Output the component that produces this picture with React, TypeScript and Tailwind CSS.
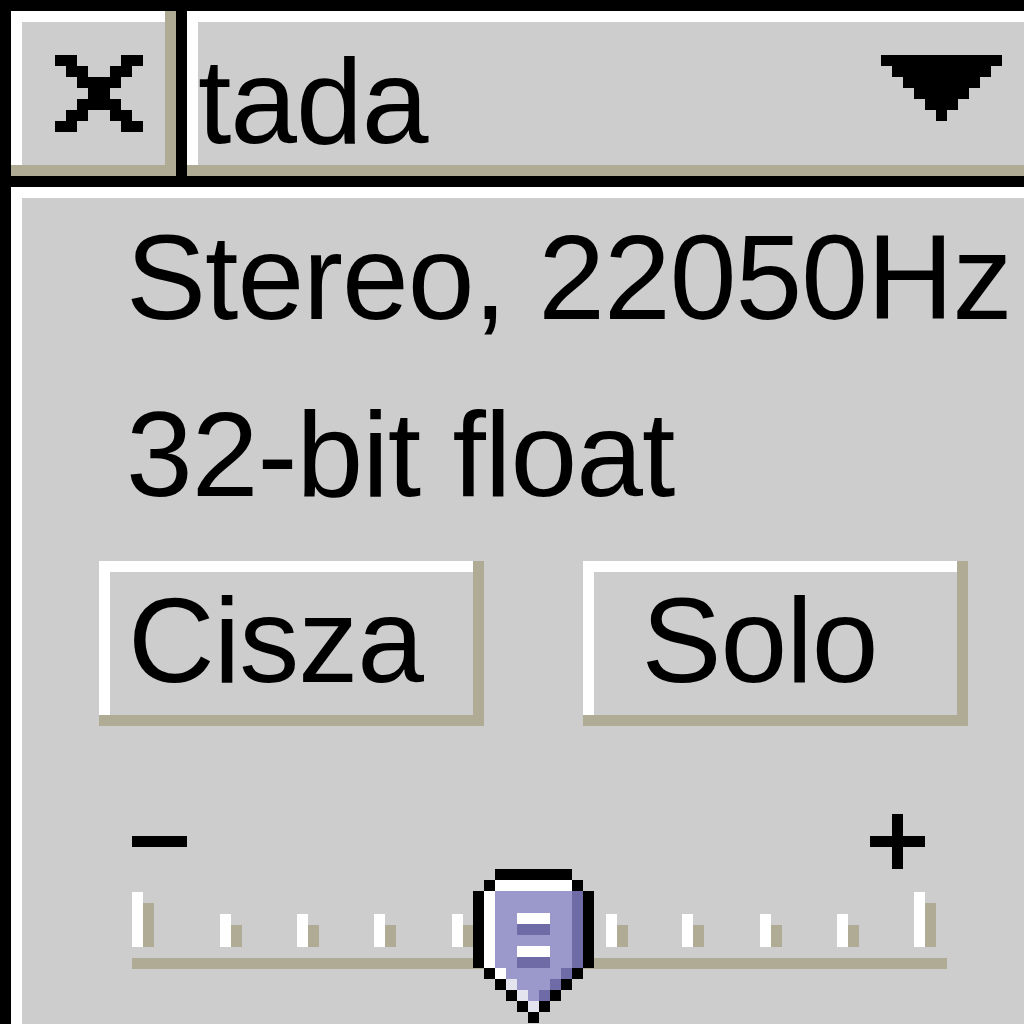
import React from 'react';

// one "pixel" of the zoomed-in bitmap ui
const U = 11;

const PAL: Record<string, string> = {
  K: '#000000',
  W: '#ffffff',
  B: '#9b99cc',
  D: '#6e6ba7',
  L: '#e4e4ee',
  T: '#b0ab94',
};

const CLOSE_X = [
  'KK....KK',
  '.KK..KK.',
  '..KKKK..',
  '...KK...',
  '..KKKK..',
  '.KK..KK.',
  'KK....KK',
];

const MENU_ARROW = [
  'KKKKKKKKKKK',
  '.KKKKKKKKK.',
  '..KKKKKKK..',
  '...KKKKK...',
  '....KKK....',
  '.....K.....',
];

const THUMB = [
  '..KKKKKKK..',
  '.KWWWWWWWK.',
  'KWBBBBBBBDK',
  'KWBBBBBBBDK',
  'KWBBWWWBBDK',
  'KWBBDDDBBDK',
  'KWBBBBBBBDK',
  'KWBBWWWBBDK',
  'KWBBDDDBBDK',
  '.KWBBBBBDK.',
  '..KLBBBDK..',
  '...KLBDK...',
  '....KLK....',
  '.....K.....',
];

const pixels = (rows: string[], ox = 0, oy = 0) =>
  rows.flatMap((row, y) =>
    row.split('').map((c, x) =>
      PAL[c] ? (
        <rect key={`${ox}-${oy}-${x}-${y}`} x={ox + x * U} y={oy + y * U} width={U} height={U} fill={PAL[c]} />
      ) : null
    )
  );

const PixelArt: React.FC<{ rows: string[]; className?: string }> = ({ rows, className }) => (
  <svg
    width={rows[0].length * U}
    height={rows.length * U}
    viewBox={`0 0 ${rows[0].length * U} ${rows.length * U}`}
    shapeRendering="crispEdges"
    className={className}
  >
    {pixels(rows)}
  </svg>
);

const SMALL_TICKS = [88, 165, 242, 320, 397, 474, 550, 628, 705];

const GainSlider = () => (
  <svg width={837} height={210} viewBox="0 0 837 210" shapeRendering="crispEdges" className="block">
    {/* minus / plus */}
    <rect x={0} y={22} width={55} height={11} fill="#000" />
    <rect x={738} y={22} width={55} height={11} fill="#000" />
    <rect x={760} y={0} width={11} height={55} fill="#000" />

    {/* end ticks */}
    {[0, 782].map((x) => (
      <g key={x}>
        <rect x={x} y={78} width={11} height={55} fill="#fff" />
        <rect x={x + 11} y={89} width={11} height={44} fill={PAL.T} />
      </g>
    ))}
    {SMALL_TICKS.map((x) => (
      <g key={x}>
        <rect x={x} y={100} width={11} height={33} fill="#fff" />
        <rect x={x + 11} y={111} width={11} height={22} fill={PAL.T} />
      </g>
    ))}

    {/* track */}
    <rect x={0} y={144} width={815} height={11} fill={PAL.T} />

    {/* thumb */}
    {pixels(THUMB, 341, 55)}
  </svg>
);

// raised 3d box: white top/left, tan bottom/right (tan wins at the corners)
const raised = 'shadow-[inset_-11px_-11px_0_#b0ab94,inset_11px_11px_0_#ffffff]';

export default function App() {
  return (
    <div className="w-[1024px] h-[1024px] overflow-hidden bg-black pl-[11px] pt-[11px] font-['Liberation_Sans',Arial,sans-serif] text-black text-[120px] leading-[88px] tracking-[-1px]">
      {/* close button + track name */}
      <div className="flex gap-[11px] h-[165px]">
        <div className={`w-[165px] h-[165px] shrink-0 bg-[#cdcdcd] pl-[44px] pt-[44px] ${raised}`}>
          <PixelArt rows={CLOSE_X} className="block" />
        </div>
        <div className={`w-[848px] h-[165px] shrink-0 bg-[#cdcdcd] flex items-start ${raised}`}>
          <div className="ml-[11px] mt-[46px] h-[88px]">tada</div>
          <PixelArt rows={MENU_ARROW} className="block ml-auto mt-[44px] mr-[33px]" />
        </div>
      </div>

      {/* track info panel */}
      <div className="mt-[11px] w-[1100px] h-[900px] bg-[#cdcdcd] pt-[46px] shadow-[inset_11px_11px_0_#ffffff]">
        <div className="ml-[115px] h-[88px]">Stereo, 22050Hz</div>
        <div className="ml-[115px] mt-[89px] h-[88px]">32-bit float</div>

        <div className="ml-[88px] mt-[63px] flex gap-[99px]">
          <div className={`w-[385px] h-[165px] flex justify-center items-start pt-[35px] pr-[32px] ${raised}`}>
            <span className="h-[88px]">Cisza</span>
          </div>
          <div className={`w-[385px] h-[165px] flex justify-center items-start pt-[35px] pr-[32px] ${raised}`}>
            <span className="h-[88px]">Solo</span>
          </div>
        </div>

        <div className="ml-[121px] mt-[88px]">
          <GainSlider />
        </div>
      </div>
    </div>
  );
}
